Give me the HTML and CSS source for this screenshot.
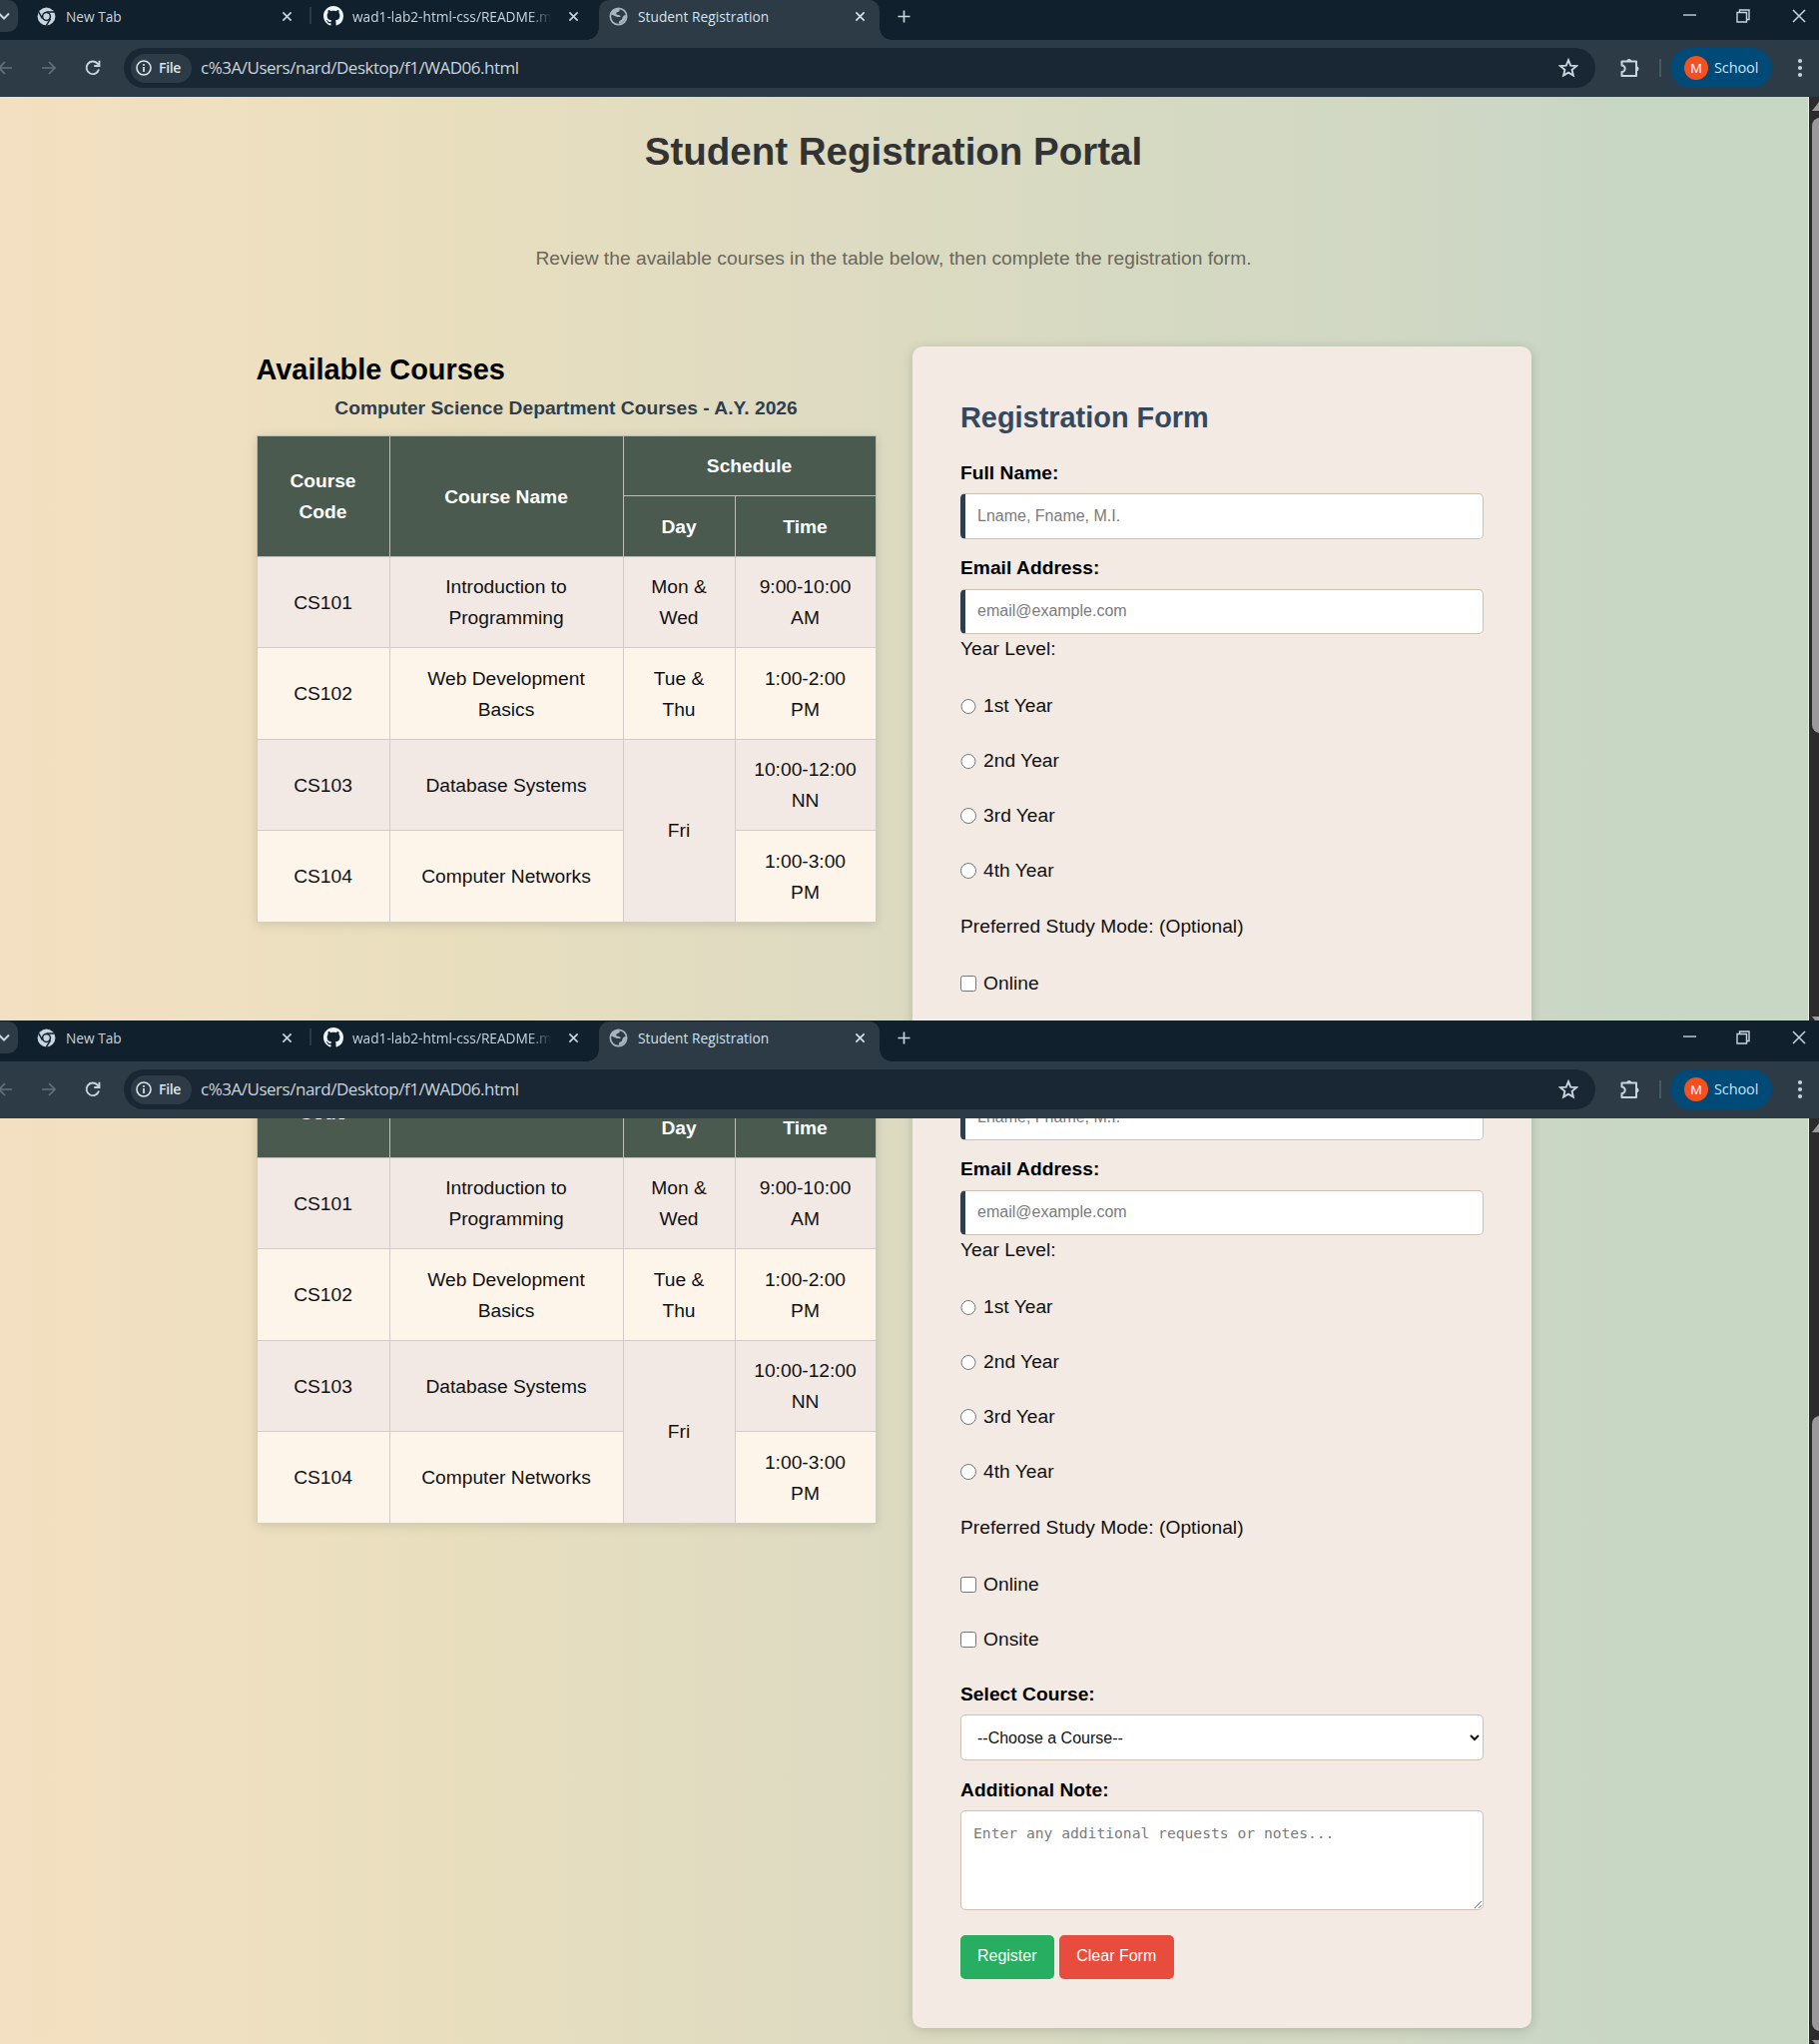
FILE: index.html
```html
<!DOCTYPE html>
<html lang="en">
<head>
<meta charset="utf-8">
<title>Student Registration</title>
<link rel="stylesheet" href="styles.css">
</head>
<body>
<svg class="sprite" aria-hidden="true">
  <symbol id="chevron" viewBox="0 0 12 12"><path d="M1 3.5 6 8.5 11 3.5" fill="none" stroke="currentColor" stroke-width="2"/></symbol>
  <symbol id="chrome" viewBox="0 0 20 20"><circle cx="10" cy="10" r="9.4" fill="#c9d5de"/><circle cx="10" cy="10" r="4.9" fill="#10202c"/><circle cx="10" cy="10" r="3.3" fill="#c9d5de"/><path d="M10 5.2H18.6M5.8 12.3 1.9 5.3M14.2 12.4 9.8 19.6" stroke="#10202c" stroke-width="1.5"/></symbol>
  <symbol id="github" viewBox="0 0 16 16"><path fill="#eef5f9" d="M8 0C3.58 0 0 3.58 0 8c0 3.54 2.29 6.53 5.47 7.59.4.07.55-.17.55-.38 0-.19-.01-.82-.01-1.49-2.01.37-2.53-.49-2.69-.94-.09-.23-.48-.94-.82-1.13-.28-.15-.68-.52-.01-.53.63-.01 1.08.58 1.23.82.72 1.21 1.87.87 2.33.66.07-.52.28-.87.51-1.07-1.78-.2-3.64-.89-3.64-3.95 0-.87.31-1.59.82-2.15-.08-.2-.36-1.02.08-2.12 0 0 .67-.21 2.2.82.64-.18 1.32-.27 2-.27s1.36.09 2 .27c1.53-1.04 2.2-.82 2.2-.82.44 1.1.16 1.92.08 2.12.51.56.82 1.27.82 2.15 0 3.07-1.87 3.75-3.65 3.95.29.25.54.73.54 1.48 0 1.07-.01 1.93-.01 2.2 0 .21.15.46.55.38A8.01 8.01 0 0 0 16 8c0-4.42-3.58-8-8-8z"/></symbol>
  <symbol id="globe" viewBox="0 0 20 20"><circle cx="10" cy="10" r="8.600" fill="#2d3b47" stroke="#a9b5bd" stroke-width="1.800"/><path d="M2 8C3 4 7 1.500 11 2c1 2-.5 3-2.500 3.500C7 6 7.500 8 9 8.200c2 .3 3.500 1 3.200 2.300H8.500C6 10 5 8.500 2 8ZM18 8.500c.5 4-2 8-7 9.300-1-1.800-.5-3.300 1.500-3.800 1.800-.5 1-2 1.800-3C15 10 15.500 8.500 18 8.500Z" fill="#a9b5bd"/></symbol>
  <symbol id="cross" viewBox="0 0 12 12"><path d="M1.500 1.500 10.500 10.500M10.500 1.500 1.500 10.500" fill="none" stroke="currentColor" stroke-width="1.800"/></symbol>
  <symbol id="close" viewBox="0 0 14 14"><path d="M1 1 13 13M13 1 1 13" fill="none" stroke="currentColor" stroke-width="1.500"/></symbol>
  <symbol id="plus" viewBox="0 0 14 14"><path d="M7 .5V13.500M.5 7H13.500" fill="none" stroke="currentColor" stroke-width="1.800"/></symbol>
  <symbol id="minimize" viewBox="0 0 14 14"><path d="M0 6.500H14" stroke="currentColor" stroke-width="1.500"/></symbol>
  <symbol id="restore" viewBox="0 0 14 14"><path d="M1 3.500h9.500V13H1zM3.500 3.500V1H13v9.500h-2.500" fill="none" stroke="currentColor" stroke-width="1.400"/></symbol>
  <symbol id="back" viewBox="0 0 16 16"><path d="M15 8H2M8 2 2 8 8 14" fill="none" stroke="currentColor" stroke-width="1.700"/></symbol>
  <symbol id="forward" viewBox="0 0 16 16"><path d="M1 8H14M8 2 14 8 8 14" fill="none" stroke="currentColor" stroke-width="1.700"/></symbol>
  <symbol id="reload" viewBox="0 0 16 16"><path d="M14 9.500A6.300 6.300 0 1 1 12.500 3.500L14.200 5.500M14.500 .8V6H9.300" fill="none" stroke="currentColor" stroke-width="1.900"/></symbol>
  <symbol id="info" viewBox="0 0 16 16"><circle cx="8" cy="8" r="7" fill="none" stroke="currentColor" stroke-width="1.600"/><path d="M8 7v5M8 4v1.800" stroke="currentColor" stroke-width="1.700"/></symbol>
  <symbol id="star" viewBox="0 0 20 20"><path d="M10 2.200 12.200 7.600 18 8.100 13.600 11.900 14.900 17.600 10 14.600 5.100 17.600 6.400 11.900 2 8.100 7.800 7.600Z" fill="none" stroke="currentColor" stroke-width="1.900"/></symbol>
  <symbol id="puzzle" viewBox="0 0 22 22"><path d="M2.500 4.500H17V19H2.500V15a3.200 3.200 0 0 0 0-6.400Z" fill="none" stroke="currentColor" stroke-width="2" stroke-linejoin="round"/><path d="M7.300 4.500a2.500 2.500 0 0 1 5 0ZM17 9.300a2.500 2.500 0 0 1 0 5Z" fill="currentColor"/></symbol>
  <symbol id="dots" viewBox="0 0 6 20"><circle cx="3" cy="3" r="2.100" fill="currentColor"/><circle cx="3" cy="10" r="2.100" fill="currentColor"/><circle cx="3" cy="17" r="2.100" fill="currentColor"/></symbol>
</svg>

<template id="browser-chrome">
  <div class="tabs">
    <div class="tab-search"><svg class="i12"><use href="#chevron"/></svg></div>
    <div class="tab tab-new"><svg class="i18"><use href="#chrome"/></svg><span class="tab-title">New Tab</span><svg class="i11"><use href="#cross"/></svg></div>
    <div class="tab-divider"></div>
    <div class="tab tab-readme"><svg class="i20"><use href="#github"/></svg><span class="tab-title fade">wad1-lab2-html-css/README.md</span><svg class="i11"><use href="#cross"/></svg></div>
    <div class="tab tab-active"><svg class="i18"><use href="#globe"/></svg><span class="tab-title wide">Student Registration</span><svg class="i11"><use href="#cross"/></svg></div>
    <svg class="i13 add"><use href="#plus"/></svg>
    <div class="window-controls"><svg class="i13"><use href="#minimize"/></svg><svg class="i14"><use href="#restore"/></svg><svg class="i14"><use href="#close"/></svg></div>
  </div>
  <div class="toolbar">
    <svg class="i16 dim back"><use href="#back"/></svg>
    <svg class="i16 dim forward"><use href="#forward"/></svg>
    <svg class="i16 reload"><use href="#reload"/></svg>
    <div class="omnibox"><span class="chip"><svg class="i16"><use href="#info"/></svg><span class="chip-text">File</span></span><span class="url">c%3A/Users/nard/Desktop/f1/WAD06.html</span><svg class="i20 star"><use href="#star"/></svg></div>
    <svg class="i22 puzzle"><use href="#puzzle"/></svg>
    <div class="bar-divider"></div>
    <div class="profile"><span class="avatar">M</span><span class="profile-name">School</span></div>
    <svg class="dots"><use href="#dots"/></svg>
  </div>
</template>

<template id="registration-page">
  <div class="page">
    <h1>Student Registration Portal</h1>
    <p class="intro">Review the available courses in the table below, then complete the registration form.</p>
    <div class="columns">
      <section class="courses">
        <h2>Available Courses</h2>
        <table>
          <caption>Computer Science Department Courses - A.Y. 2026</caption>
          <colgroup><col class="c-code"><col class="c-name"><col class="c-day"><col class="c-time"></colgroup>
          <thead>
            <tr><th rowspan="2">Course Code</th><th rowspan="2">Course Name</th><th colspan="2">Schedule</th></tr>
            <tr><th>Day</th><th>Time</th></tr>
          </thead>
          <tbody>
            <tr><td>CS101</td><td>Introduction to Programming</td><td>Mon &amp; Wed</td><td>9:00-10:00 AM</td></tr>
            <tr><td>CS102</td><td>Web Development Basics</td><td>Tue &amp; Thu</td><td>1:00-2:00 PM</td></tr>
            <tr><td>CS103</td><td>Database Systems</td><td rowspan="2">Fri</td><td>10:00-12:00 NN</td></tr>
            <tr><td>CS104</td><td>Computer Networks</td><td>1:00-3:00 PM</td></tr>
          </tbody>
        </table>
      </section>
      <form class="card">
        <h2>Registration Form</h2>
        <label class="field-label">Full Name:</label>
        <input class="field accent" type="text" placeholder="Lname, Fname, M.I.">
        <label class="field-label">Email Address:</label>
        <input class="field accent" type="email" placeholder="email@example.com">
        <p class="group-title">Year Level:</p>
        <div class="options">
          <label><input type="radio" name="year">1st Year</label>
          <label><input type="radio" name="year">2nd Year</label>
          <label><input type="radio" name="year">3rd Year</label>
          <label><input type="radio" name="year">4th Year</label>
        </div>
        <p class="group-title spaced">Preferred Study Mode: (Optional)</p>
        <div class="options">
          <label><input type="checkbox">Online</label>
          <label><input type="checkbox">Onsite</label>
        </div>
        <label class="field-label after-options">Select Course:</label>
        <select class="field"><option>--Choose a Course--</option></select>
        <label class="field-label">Additional Note:</label>
        <textarea class="field" placeholder="Enter any additional requests or notes..."></textarea>
        <div class="actions"><button type="button" class="register">Register</button><button type="button" class="clear">Clear Form</button></div>
      </form>
    </div>
  </div>
</template>

<main>
  <section class="window first"><header></header><div class="viewport"><div class="content"></div><div class="scrollbar"><i class="up"></i><i class="thumb"></i><i class="down"></i></div></div></section>
  <section class="window second"><header></header><div class="viewport"><div class="content"></div><div class="scrollbar"><i class="up"></i><i class="thumb"></i><i class="down"></i></div></div></section>
</main>
<script src="app.js"></script>
</body>
</html>
```
FILE: app.js
```js
// Both windows show the same document, at two scroll positions.
const bar = document.getElementById('browser-chrome');
const page = document.getElementById('registration-page');
document.querySelectorAll('.window').forEach((win) => {
  win.querySelector('header').append(bar.content.cloneNode(true));
  win.querySelector('.content').append(page.content.cloneNode(true));
});
```
FILE: styles.css
```css
* { box-sizing: border-box; }
body { margin: 0; width: 1822px; height: 2047px; overflow: hidden; font: 19.2px/30.72px "Liberation Sans", Arial, sans-serif; color: #111; }
h1, h2, p { margin: 0; }
svg { display: block; flex: none; }
.sprite { position: absolute; width: 0; height: 0; }
.i11 { width: 11px; height: 11px; }
.i12 { width: 12px; height: 12px; }
.i13 { width: 13px; height: 13px; }
.i14 { width: 14px; height: 14px; }
.i16 { width: 16px; height: 16px; }
.i18 { width: 19px; height: 19px; }
.i20 { width: 20px; height: 20px; }
.i22 { width: 22px; height: 22px; }

/* Browser window */
.window { display: flex; flex-direction: column; overflow: hidden; }
.first { height: 1022px; }
.second { height: 1025px; }
header { flex: none; height: 97px; background: #2d3b47; color: #c9d5de; font-family: "Open Sans", "Noto Sans", sans-serif; }
.second header { height: 98px; padding-top: 1px; background: linear-gradient(#10202c 1px, #2d3b47 1px); }
.tabs { display: flex; height: 40px; background: #10202c; align-items: flex-start; }
.tab-search { width: 18px; height: 32px; padding-top: 10px; background: #2d3b47; border-radius: 0 10px 10px 0; }
.tab-search svg { margin-left: -2px; }
.tab { display: flex; align-items: center; height: 32px; }
.tab-title { flex: 1; min-width: 0; padding-top: 1px; font-size: 13.7px; line-height: 20px; white-space: nowrap; overflow: hidden; }
.wide { letter-spacing: .05px; }
.tab-new { width: 275px; padding-left: 19px; gap: 10px; }
.tab-divider { width: 2px; height: 17px; margin: 7px 0 0 17px; background: #2a3a47; }
.tab-readme { width: 268px; padding-left: 12px; gap: 9px; }
.tab-readme svg:last-child { margin-left: 7px; }
.fade { -webkit-mask-image: linear-gradient(to right, #000 88%, transparent 100%); mask-image: linear-gradient(to right, #000 88%, transparent 100%); }
.tab-active { position: relative; width: 281px; height: 40px; margin-left: 20px; padding: 0 14px 8px 10px; gap: 10px; background: #2d3b47; border-radius: 10px 10px 0 0; color: #d5e2ec; }
.tab-active::before, .tab-active::after { content: ""; position: absolute; bottom: 0; width: 12px; height: 12px; }
.tab-active::before { left: -12px; background: radial-gradient(circle at 0 0, transparent 11.5px, #2d3b47 12px); }
.tab-active::after { right: -12px; background: radial-gradient(circle at 100% 0, transparent 11.5px, #2d3b47 12px); }
.add { margin: 9.500px 0 0 18px; }
.window-controls { display: flex; gap: 40px; margin: 9px 13px 0 auto; }
.window-controls svg:last-child { margin-left: 2px; }
.toolbar { display: flex; align-items: center; height: 56px; }
.dim { color: #62717d; }
.back { margin-left: -3px; }
.forward { margin-left: 28px; }
.reload { margin-left: 28px; }
.omnibox { display: flex; align-items: center; width: 1474px; height: 40px; margin-left: 23px; padding: 0 17px 0 7px; background: #182733; border-radius: 20px; }
.chip { display: flex; align-items: center; gap: 7px; width: 61px; height: 29px; padding-left: 5px; background: #2d3b47; border-radius: 15px; color: #dce6ed; }
.chip-text { font-size: 14px; font-weight: 600; letter-spacing: -.3px; }
.url { margin-left: 9px; padding-top: 1px; font-size: 17px; letter-spacing: -.48px; white-space: nowrap; }
.star { margin-left: auto; }
.puzzle { margin-left: 24px; }
.bar-divider { width: 2px; height: 18px; margin-left: 18px; background: #455866; }
.profile { display: flex; align-items: center; gap: 6px; width: 102px; height: 40px; margin-left: 9px; padding-left: 14px; background: #004a77; border-radius: 20px; color: #c2e7ff; }
.avatar { width: 24px; height: 24px; border-radius: 50%; background: #f4511e; color: #fff; font-size: 13px; line-height: 24px; text-align: center; }
.profile-name { font-size: 14.500px; letter-spacing: -.1px; }
.dots { width: 6px; height: 20px; margin-left: 25px; }

.viewport { display: flex; flex: 1; min-height: 0; }
.content { flex: 1; height: 100%; overflow: hidden; background: linear-gradient(to right, #f3dfc1 0, #eee0c0 12%, #e7debe 27%, #dedbc2 45%, #d7dac1 60%, #cfd7c4 80%, #c8d6c4 90%, #c7d7c3 100%); border-right: 1px solid #eef0e2; }
.scrollbar { position: relative; width: 10px; background: #2b2b2b; overflow: hidden; }
.scrollbar i { position: absolute; left: 3px; }
.up { top: 5px; border: 7px solid transparent; border-top: 0; border-bottom: 9px solid #9a9a9a; }
.thumb { width: 16px; height: 616px; background: #9a9a9a; border-radius: 8px; }
.down { bottom: -5px; border: 7px solid transparent; border-bottom: 0; border-top: 9px solid #9a9a9a; }
.first .thumb { top: 21px; }
.second .thumb { top: 298px; }

/* Registration page */
.page { width: 1277px; margin-left: 256.500px; }
.second .page { margin-top: -421px; }
h1 { padding-top: 24px; font-size: 38.500px; line-height: 61.400px; text-align: center; color: #333; }
.intro { padding: 62px 0 71.500px; text-align: center; color: #6b675c; letter-spacing: .03px; }
.columns { display: grid; grid-template-columns: 1fr 1fr; gap: 36px; align-items: start; }
h2 { font-size: 28.900px; line-height: 46px; }
.courses h2 { color: #000; }
table { width: 620px; table-layout: fixed; border-collapse: collapse; text-align: center; line-height: 31px; box-shadow: 0 2px 10px rgba(0, 0, 0, .12); }
caption { padding-bottom: 12px; font-weight: bold; color: #2c3e50; letter-spacing: .03px; }
.c-code { width: 133px; }
.c-name { width: 234px; }
.c-day { width: 112px; }
.c-time { width: 141px; }
th, td { padding: 0 14px; border: 1px solid #d3cbc5; }
th { height: 60.600px; padding-top: 1px; background: #4a5a4e; color: #fff; border-color: #b9c0b7; }
td { height: 91.500px; }
tbody tr:nth-child(odd) { background: #f2e9e4; }
tbody tr:nth-child(even) { background: #fef5ea; }
.card { height: 1082.500px; padding: 48.500px 48px 0 48.500px; background: #f3eae4; border-radius: 10px; box-shadow: 0 2px 12px rgba(0, 0, 0, .16); }
.card h2 { margin-bottom: 17.600px; color: #34495e; }
.field-label { display: block; margin: 14.600px 0 4.800px; font-weight: bold; color: #000; letter-spacing: .03px; }
.field { display: block; width: 100%; height: 45.400px; margin: 0; padding: 0 12px; border: 1px solid #cfc0b0; border-radius: 5px; background: #fff; font: 16px "Liberation Sans", Arial, sans-serif; color: #111; }
.accent { border-left: 5px solid #2c3e50; }
.field::placeholder { color: #7b7b7b; opacity: 1; }
select.field { height: 46px; }
textarea.field { height: 100px; padding: 12px; font: 14.650px/20px "DejaVu Sans Mono", monospace; resize: vertical; }
.group-title { letter-spacing: .03px; }
.options { display: grid; gap: 24.200px; padding-top: 26.300px; }
.options label { display: flex; align-items: center; height: 30.700px; }
.options input { width: 15.600px; height: 15.600px; margin: 0 7.500px 0 0; }
.spaced { margin-top: 25.400px; }
.after-options { margin-top: 24.200px; }
.actions { display: flex; gap: 5.500px; margin-top: 24.500px; }
button { height: 44px; border: 0; border-radius: 5px; font: 16px "Liberation Sans", Arial, sans-serif; color: #fff; padding: 0 0 2px; }
.register { width: 93.500px; background: #27ae60; }
.clear { width: 114.500px; background: #e74c3c; }
```
